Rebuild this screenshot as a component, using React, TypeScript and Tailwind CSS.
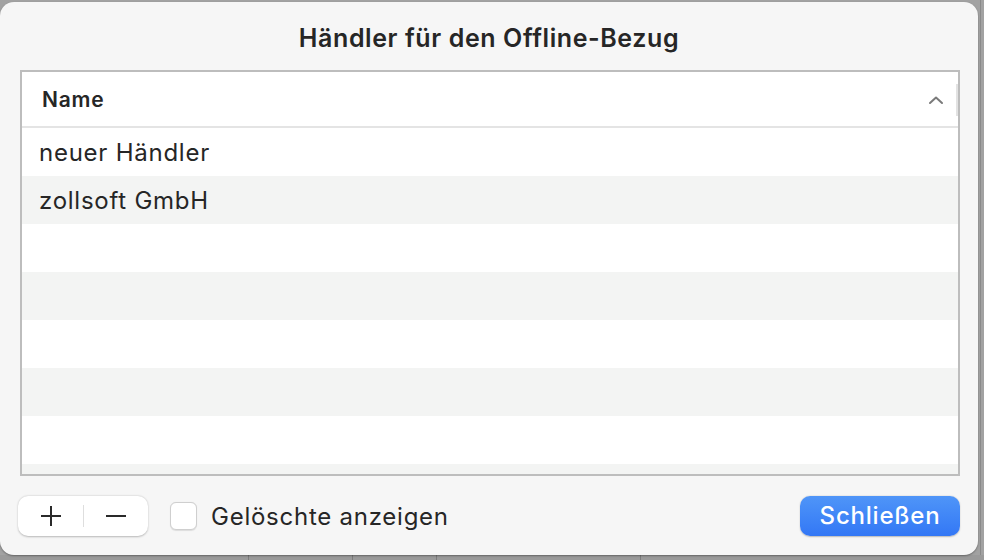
import React from "react";

const rows = ["neuer Händler", "zollsoft GmbH", "", "", "", "", "", ""];

export default function App() {
  return (
    <div
      className="relative w-[984px] h-[560px] overflow-hidden bg-[#a2a2a2]"
      style={{ fontFamily: "Inter, 'Noto Sans', 'Liberation Sans', sans-serif" }}
    >
      {/* background window hints */}
      <div className="absolute right-[3px] top-0 h-full w-[1px] bg-[#8a8a8a]" />
      <div className="absolute left-0 bottom-0 w-full h-[5px] bg-[#9a9a9a]" />
      <div className="absolute left-[248px] bottom-0 h-[5px] w-[1px] bg-[#7c7c7c]" />
      <div className="absolute left-[352px] bottom-0 h-[5px] w-[1px] bg-[#7c7c7c]" />
      <div className="absolute left-[436px] bottom-0 h-[5px] w-[1px] bg-[#7c7c7c]" />
      <div className="absolute left-[640px] bottom-0 h-[5px] w-[1px] bg-[#7c7c7c]" />

      <div className="relative mt-[2px] w-[978px] h-[553px] rounded-[14px] bg-[#f6f6f6] shadow-[0_1px_2px_rgba(0,0,0,0.35)] flex flex-col">
        <div className="h-[68px] flex items-center justify-center pt-[5px]">
          <span className="text-[25px] font-semibold text-[#262626] tracking-[0.6px]">
            Händler für den Offline-Bezug
          </span>
        </div>

        <div className="ml-[20px] w-[940px] h-[406px] border-2 border-[#bdbdbd] bg-white flex flex-col overflow-hidden">
          <div className="h-[56px] shrink-0 flex items-center border-b-2 border-[#e4e4e4] relative">
            <span className="pl-[20px] pt-[2px] text-[21px] font-semibold text-[#262626] tracking-[0.8px]">Name</span>
            <svg
              className="absolute left-[906px] top-[23px]"
              width="16"
              height="10"
              viewBox="0 0 16 10"
              fill="none"
            >
              <path d="M2 8 L8 2.5 L14 8" stroke="#7a7a7a" strokeWidth="2" strokeLinecap="round" strokeLinejoin="round" />
            </svg>
            <div className="absolute right-0 top-[12px] w-[2px] h-[32px] bg-[#e2e2e2]" />
          </div>
          {rows.map((r, i) => (
            <div
              key={i}
              className={`h-[48px] shrink-0 flex items-center pl-[17px] pt-[2px] text-[24px] tracking-[0.75px] text-[#262626] ${
                i % 2 === 1 ? "bg-[#f3f4f3]" : "bg-white"
              }`}
            >
              {r}
            </div>
          ))}
        </div>

        <div className="mt-[20px] h-[40px] flex items-center pl-[18px] pr-[18px]">
          <div className="w-[130px] h-[40px] rounded-[10px] bg-white shadow-[0_0.5px_2px_rgba(0,0,0,0.25)] flex items-center">
            <div className="w-[65px] h-full flex items-center justify-center">
              <svg width="22" height="22" viewBox="0 0 22 22">
                <path d="M11 1 V21 M1 11 H21" stroke="#2a2a2a" strokeWidth="2" />
              </svg>
            </div>
            <div className="w-[1px] h-[22px] bg-[#dedede]" />
            <div className="flex-1 h-full flex items-center justify-center">
              <svg width="22" height="22" viewBox="0 0 22 22">
                <path d="M1 11 H21" stroke="#2a2a2a" strokeWidth="2" />
              </svg>
            </div>
          </div>

          <div className="ml-[22px] w-[27px] h-[28px] rounded-[6px] bg-white border border-[#cfcfcf] shadow-[0_0.5px_1px_rgba(0,0,0,0.1)]" />
          <span className="ml-[14px] pt-[2px] text-[24px] tracking-[0.75px] text-[#262626]">Gelöschte anzeigen</span>

          <div className="ml-auto w-[160px] h-[40px] rounded-[10px] bg-gradient-to-b from-[#4f95f8] to-[#3377f5] shadow-[0_0.5px_1.5px_rgba(0,0,0,0.25)] flex items-center justify-center">
            <span className="text-[24px] font-medium tracking-[0.8px] text-white">Schließen</span>
          </div>
        </div>
      </div>
    </div>
  );
}
